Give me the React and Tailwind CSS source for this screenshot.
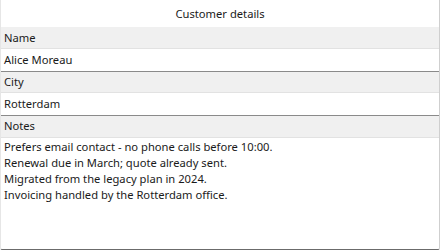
export default function App() {
  const font = { fontFamily: '"Segoe UI", "Noto Sans", "Open Sans", sans-serif' };
  return (
    <div
      className="w-[440px] h-[250px] bg-white flex flex-col border-l border-l-[#e6e6e6] border-r border-r-[#cfcfcf] border-b border-b-[#6b6b6b] rounded-b-[2px] text-[11.2px] text-[#1a1a1a] overflow-hidden"
      style={font}
    >
      <div className="h-[27px] shrink-0 flex items-center justify-center pt-[2px]">Customer details</div>
      <div className="h-[22px] shrink-0 bg-[#f0f0f0] border-b border-[#e2e2e2] flex items-center px-[3px] pt-[1px]">Name</div>
      <div className="h-[23px] shrink-0 border-b border-[#8a8a8a] flex items-center px-[3px]">Alice Moreau</div>
      <div className="h-[21px] shrink-0 bg-[#f0f0f0] border-b border-[#e2e2e2] flex items-center px-[3px]">City</div>
      <div className="h-[23px] shrink-0 border-b border-[#8a8a8a] flex items-center px-[3px]">Rotterdam</div>
      <div className="h-[22px] shrink-0 bg-[#f0f0f0] border-b border-[#e2e2e2] flex items-center px-[3px]">Notes</div>
      <div className="flex-1 px-[3px] pt-[1px] leading-[16px]">
        <div>Prefers email contact - no phone calls before 10:00.</div>
        <div>Renewal due in March; quote already sent.</div>
        <div>Migrated from the legacy plan in 2024.</div>
        <div>Invoicing handled by the Rotterdam office.</div>
      </div>
    </div>
  );
}
